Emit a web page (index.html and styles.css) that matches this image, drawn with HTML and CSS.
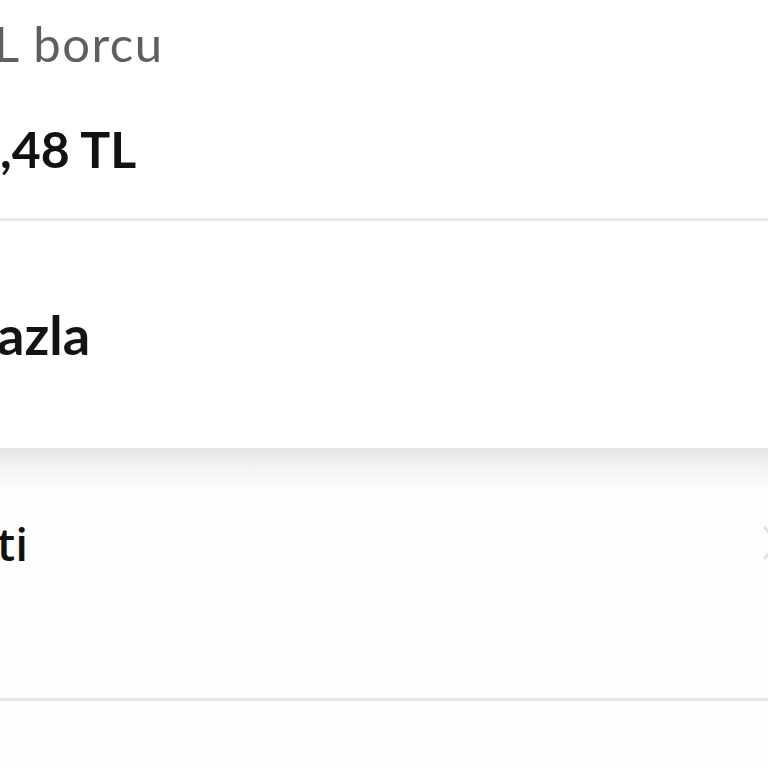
FILE: index.html
```html
<!DOCTYPE html>
<html lang="tr">
<head>
<meta charset="utf-8">
<link rel="stylesheet" href="styles.css">
</head>
<body>
<div class="page">
  <section class="debt">
    <div class="line label l1"><span class="cut">Toplam T</span><span class="vis">L borcu</span></div>
    <div class="line amount l2"><span class="cut">1.254</span><span class="vis">,48 TL</span></div>
  </section>
  <section class="more">
    <div class="line more-text l3"><span class="cut">Daha f</span><span class="vis">azla</span></div>
  </section>
  <section class="list">
    <div class="row">
      <div class="line row-text l4"><span class="cut">Hesap öze</span><span class="vis">ti</span></div>
      <svg class="chev" width="20" height="36" viewBox="0 0 20 36"><path d="M3 3 L16 18 L3 33" fill="none" stroke="#e2e2e2" stroke-width="3" stroke-linecap="round" stroke-linejoin="round"/></svg>
    </div>
  </section>
</div>
</body>
</html>
```
FILE: styles.css
```css
html, body {
  margin: 0;
  padding: 0;
  background: #fefefe;
  overflow: hidden;
}
.page {
  width: 768px;
  height: 768px;
  overflow: hidden;
  font-family: "Lato", "Open Sans", sans-serif;
}
.line {
  display: flex;
  white-space: nowrap;
}
.cut {
  display: flex;
  justify-content: flex-end;
  width: 400px;
  flex: none;
}
.debt {
  background: #ffffff;
  padding-top: 13px;
  height: 205px;
  border-bottom: 3px solid #e7e7e7;
  box-sizing: content-box;
}
.label {
  font-size: 49px;
  letter-spacing: 1.5px;
  color: #5f5f63;
  line-height: 60px;
  margin-left: -406px;
}
.amount {
  font-size: 50px;
  font-weight: 700;
  color: #121212;
  line-height: 60px;
  margin-top: 46px;
  margin-left: -400px;
}
.more {
  background: #ffffff;
  height: 227px;
  display: flex;
  align-items: center;
}
.more-text {
  font-size: 54px;
  font-weight: 700;
  color: #141414;
  margin-left: -403px;
  margin-top: 0;
}
.list {
  height: 253px;
  background: linear-gradient(#e3e3e3 0px, #f3f3f3 18px, #fcfcfc 40px, #fefefe 50px);
  border-bottom: 3px solid #e6e6e6;
  box-sizing: border-box;
}
.row {
  display: flex;
  align-items: center;
  justify-content: space-between;
  padding-top: 67px;
}
.row-text {
  font-family: "Open Sans", sans-serif;
  font-size: 46px;
  font-weight: 600;
  color: #111;
  margin-left: -403px;
  line-height: 56px;
}
.chev {
  margin-right: -14px;
  flex: none;
}
```
